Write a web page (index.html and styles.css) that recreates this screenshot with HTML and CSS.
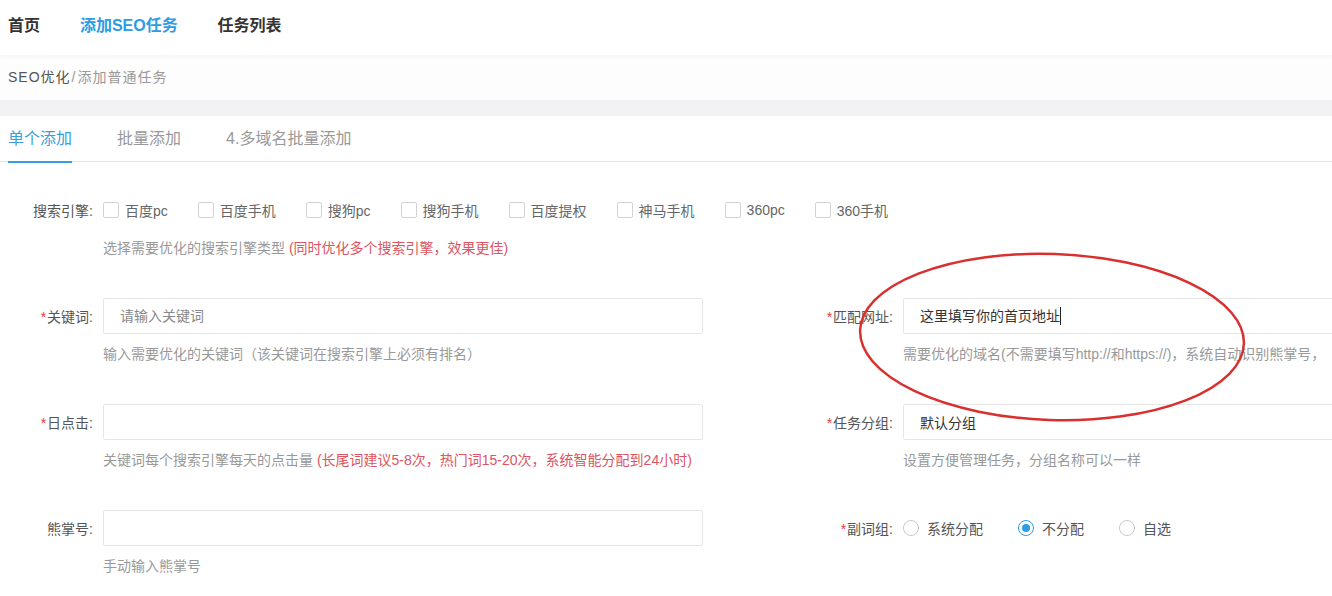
FILE: index.html
```html
<!DOCTYPE html>
<html lang="zh-CN">
<head>
	<meta charset="UTF-8">
	<title>添加SEO任务</title>
	<link rel="stylesheet" href="styles.css">
</head>
<body>
	<div class="nav">
		<a class="nav-item" href="javascript:void(0);">首页</a>
		<a class="nav-item active" href="javascript:void(0);">添加SEO任务</a>
		<a class="nav-item" href="javascript:void(0);">任务列表</a>
	</div>
	<div class="crumb">
		<span class="crumb-root">SEO优化</span><span class="crumb-sep">/</span><span class="crumb-cur">添加普通任务</span>
	</div>

	<div class="card">
		<ul class="tabs">
			<li class="tab active">单个添加</li>
			<li class="tab">批量添加</li>
			<li class="tab">4.多域名批量添加</li>
		</ul>

		<div class="form">
			<!-- 搜索引擎 -->
			<div class="item full">
				<div class="line">
					<label class="label">搜索引擎:</label>
					<div class="checks">
						<span class="check"><i class="box"></i>百度pc</span>
						<span class="check"><i class="box"></i>百度手机</span>
						<span class="check"><i class="box"></i>搜狗pc</span>
						<span class="check"><i class="box"></i>搜狗手机</span>
						<span class="check"><i class="box"></i>百度提权</span>
						<span class="check"><i class="box"></i>神马手机</span>
						<span class="check"><i class="box"></i>360pc</span>
						<span class="check"><i class="box"></i>360手机</span>
					</div>
				</div>
				<div class="help">选择需要优化的搜索引擎类型 <em>(同时优化多个搜索引擎，效果更佳)</em></div>
			</div>

			<!-- 关键词 / 匹配网址 -->
			<div class="item">
				<div class="line">
					<label class="label"><b>*</b>关键词:</label>
					<input class="input" type="text" name="keyword" placeholder="请输入关键词">
				</div>
				<div class="help">输入需要优化的关键词（该关键词在搜索引擎上必须有排名）</div>
			</div>
			<div class="item">
				<div class="line">
					<label class="label"><b>*</b>匹配网址:</label>
					<div class="input">这里填写你的首页地址<span class="caret"></span></div>
				</div>
				<div class="help">需要优化的域名(不需要填写http://和https://)，系统自动识别熊掌号，</div>
			</div>

			<!-- 日点击 / 任务分组 -->
			<div class="item">
				<div class="line">
					<label class="label"><b>*</b>日点击:</label>
					<input class="input" type="text" name="clicks">
				</div>
				<div class="help">关键词每个搜索引擎每天的点击量 <em>(长尾词建议5-8次，热门词15-20次，系统智能分配到24小时)</em></div>
			</div>
			<div class="item">
				<div class="line">
					<label class="label"><b>*</b>任务分组:</label>
					<input class="input" type="text" name="group" value="默认分组">
				</div>
				<div class="help">设置方便管理任务，分组名称可以一样</div>
			</div>

			<!-- 熊掌号 / 副词组 -->
			<div class="item">
				<div class="line">
					<label class="label">熊掌号:</label>
					<input class="input" type="text" name="xzh">
				</div>
				<div class="help">手动输入熊掌号</div>
			</div>
			<div class="item">
				<div class="line">
					<label class="label"><b>*</b>副词组:</label>
					<div class="radios">
						<span class="radio"><i class="dot"></i>系统分配</span>
						<span class="radio on"><i class="dot"></i>不分配</span>
						<span class="radio"><i class="dot"></i>自选</span>
					</div>
				</div>
			</div>
		</div>
	</div>

	<!-- 截图上的红色圈注 -->
	<svg class="mark" width="420" height="190" viewBox="0 0 420 190">
		<ellipse cx="202" cy="92" rx="192" ry="83" transform="rotate(2 202 92)" fill="none" stroke="#d8302f" stroke-width="2.5"/>
	</svg>
</body>
</html>
```

FILE: styles.css
```css
body{
	margin: 0;
	padding: 0;
	background-color: #F2F2F5;
	font-family: "Liberation Sans", "Noto Sans CJK SC", sans-serif;
	font-size: 14px;
	color: #333;
	overflow: hidden;
	position: relative;
}

.nav{
	height: 55px;
	line-height: 52px;
	padding-left: 8px;
	background-color: #FFF;
	position: relative;
	z-index: 1;
	box-shadow: 0 2px 5px rgba(0,0,0,0.04);
}

.nav-item{
	font-size: 16px;
	font-weight: bold;
	color: #333;
	text-decoration: none;
	margin-right: 36px;
}

.nav-item.active{
	color: #2D9BE6;
}

.crumb{
	height: 45px;
	line-height: 45px;
	padding-left: 8px;
	background-color: #FDFDFD;
	font-size: 14px;
	letter-spacing: 1px;
}

.crumb-root{
	color: #555;
}

.crumb-sep,
.crumb-cur{
	color: #999;
}

.crumb-sep{
	margin: 0 1px;
}

.card{
	margin-top: 16px;
	background-color: #FFF;
	height: 480px;
}

.tabs{
	margin: 0;
	padding: 0 0 0 8px;
	list-style: none;
	display: flex;
	align-items: flex-start;
	height: 45px;
	border-bottom: 1px solid #E6E6E6;
}

.tab{
	height: 45px;
	line-height: 45px;
	font-size: 16px;
	color: #999;
	margin-right: 45px;
	border-bottom: 2px solid transparent;
}

.tab.active{
	color: #3A9FD8;
	border-bottom-color: #3A9FD8;
}

.form{
	width: 1600px;
	padding-top: 30px;
	display: grid;
	grid-template-columns: 800px 800px;
}

.item{
	margin-bottom: 40px;
}

.item.full{
	grid-column: 1 / -1;
}

.line{
	display: flex;
	align-items: center;
	height: 36px;
}

.label{
	width: 103px;
	box-sizing: border-box;
	padding-right: 10px;
	text-align: right;
	color: #555;
	flex-shrink: 0;
}

.label b{
	color: #E4393C;
	font-weight: normal;
	font-size: 14px;
	margin-right: 1px;
}

.input{
	width: 600px;
	height: 36px;
	box-sizing: border-box;
	border: 1px solid #E6E6E6;
	border-radius: 2px;
	padding: 0 16px;
	font-family: inherit;
	font-size: 14px;
	line-height: 34px;
	color: #333;
	outline: none;
	background: #FFF;
	flex-shrink: 0;
}

.input::placeholder{
	color: #888;
}

.caret{
	display: inline-block;
	width: 1px;
	height: 18px;
	background-color: #222;
	vertical-align: middle;
	margin-top: -2px;
}

.help{
	margin: 10px 0 0 103px;
	line-height: 20px;
	color: #999;
	white-space: nowrap;
}

.help em{
	font-style: normal;
	color: #DB5560;
}

.checks,
.radios{
	display: flex;
	align-items: center;
	color: #666;
}

.check{
	display: inline-flex;
	align-items: center;
	margin-right: 30px;
}

.box{
	width: 16px;
	height: 16px;
	box-sizing: border-box;
	border: 1px solid #D2D2D2;
	border-radius: 2px;
	margin-right: 6px;
}

.radio{
	display: inline-flex;
	align-items: center;
	margin-right: 35px;
	color: #555;
}

.dot{
	width: 16px;
	height: 16px;
	box-sizing: border-box;
	border: 1px solid #C8C8C8;
	border-radius: 50%;
	margin-right: 8px;
	position: relative;
}

.radio.on .dot{
	border-color: #2D9BE6;
}

.radio.on .dot:after{
	content: "";
	position: absolute;
	left: 3px;
	top: 3px;
	width: 8px;
	height: 8px;
	border-radius: 50%;
	background-color: #2D9BE6;
}

.mark{
	position: absolute;
	left: 850px;
	top: 245px;
}
```
